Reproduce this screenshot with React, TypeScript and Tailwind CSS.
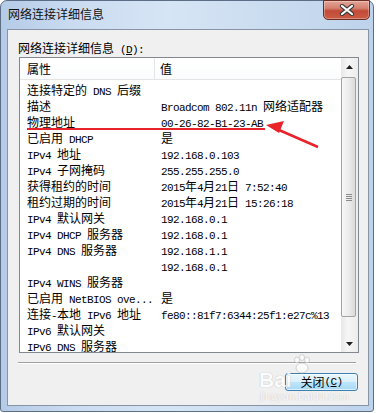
const rows: [string, string][] = [
  ['连接特定的 DNS 后缀', ''],
  ['描述', 'Broadcom 802.11n 网络适配器'],
  ['物理地址', '00-26-82-B1-23-AB'],
  ['已启用 DHCP', '是'],
  ['IPv4 地址', '192.168.0.103'],
  ['IPv4 子网掩码', '255.255.255.0'],
  ['获得租约的时间', '2015年4月21日 7:52:40'],
  ['租约过期的时间', '2015年4月21日 15:26:18'],
  ['IPv4 默认网关', '192.168.0.1'],
  ['IPv4 DHCP 服务器', '192.168.0.1'],
  ['IPv4 DNS 服务器', '192.168.1.1'],
  ['', '192.168.0.1'],
  ['IPv4 WINS 服务器', ''],
  ['已启用 NetBIOS ove...', '是'],
  ['连接-本地 IPv6 地址', 'fe80::81f7:6344:25f1:e27c%13'],
  ['IPv6 默认网关', ''],
  ['IPv6 DNS 服务器', ''],
];

// SimSun style: half-width latin (6px) mixed with 12px CJK
function Mixed({ text }: { text: string }) {
  const parts = text.split(/([\x20-\x7e]+)/).filter(Boolean);
  return (
    <>
      {parts.map((p, i) =>
        /^[\x20-\x7e]+$/.test(p) ? (
          <span key={i} className="font-['Liberation_Mono',monospace] text-[11px] tracking-[-0.6px] whitespace-pre">
            {p}
          </span>
        ) : (
          <span key={i}>{p}</span>
        )
      )}
    </>
  );
}

function ScrollBar() {
  return (
    <div className="w-[17px] shrink-0 flex flex-col bg-[linear-gradient(90deg,#e8e8e8,#f6f6f6_40%,#ececec)]">
      <div className="h-[17px] flex items-center justify-center">
        <svg width="7" height="4" viewBox="0 0 7 4">
          <path d="M3.5 0 L7 4 L0 4 Z" fill="#1f1f1f" />
        </svg>
      </div>
      <div className="mr-[2px] mt-[2px] h-[240px] rounded-[2px] border border-[#a3a3a3] bg-[linear-gradient(90deg,#f7f7f7,#ececec_50%,#dadada)] flex items-center justify-center">
        <div className="flex flex-col gap-[1px]">
          <div className="w-[6px] h-[1px] bg-[#8a8a8a]" />
          <div className="w-[6px] h-[1px] bg-[#8a8a8a]" />
          <div className="w-[6px] h-[1px] bg-[#8a8a8a]" />
          <div className="w-[6px] h-[1px] bg-[#8a8a8a]" />
        </div>
      </div>
      <div className="flex-1" />
      <div className="h-[17px] flex items-center justify-center">
        <svg width="7" height="4" viewBox="0 0 7 4">
          <path d="M0 0 L7 0 L3.5 4 Z" fill="#1f1f1f" />
        </svg>
      </div>
    </div>
  );
}

export default function App() {
  return (
    <div className="relative w-[376px] h-[413px] overflow-hidden bg-white font-['Noto_Sans_CJK_SC',sans-serif] text-[12px] text-black">
      <div className="w-[374px] h-[412px] flex flex-col border border-[#5c6e86] rounded-t-[7px] rounded-b-[3px] bg-[linear-gradient(90deg,#b4cbe7_0%,#cbdcf1_20%,#d6e5f5_45%,#c9dbef_75%,#bdd3ec_100%)] pl-[6px] pr-[4px] pb-[5px]">
        {/* title bar */}
        <div className="h-[28px] shrink-0 flex items-start">
          <div className="mt-[5px] ml-[1px] leading-[16px] text-[12px] text-[#111]">网络连接详细信息</div>
          <div className="ml-auto -mt-[1px] -mr-[1px] w-[47px] h-[20px] rounded-b-[5px] border border-[#6d2d24] bg-[linear-gradient(180deg,#e3a597_0%,#d5806f_40%,#c24a37_55%,#cb5c45_100%)] shadow-[inset_0_0_0_1px_rgba(255,255,255,0.3)] flex items-center justify-center">
            <svg width="16" height="12" viewBox="0 0 16 12">
              <path d="M3 2 L13 10 M13 2 L3 10" stroke="#3a3a3a" strokeWidth="4.2" strokeLinecap="round" />
              <path d="M3 2 L13 10 M13 2 L3 10" stroke="#ffffff" strokeWidth="2.2" strokeLinecap="round" />
            </svg>
          </div>
        </div>

        {/* client area */}
        <div className="flex-1 flex flex-col border border-[#8794a6] bg-[#f0f0f0] pl-[10px] pt-[10px]">
          <div className="h-[16px] leading-[16px] mb-[1px]">
            <Mixed text="网络连接详细信息 (" />
            <span className="font-['Liberation_Mono',monospace] text-[11px] tracking-[-0.6px] underline">D</span>
            <Mixed text="):" />
          </div>

          <div className="ml-[1px] w-[340px] h-[296px] flex border border-[#828790] bg-white">
            <div className="flex-1 min-w-0 flex flex-col">
              <div className="h-[22px] shrink-0 flex border-b border-[#e5e5e5] bg-[linear-gradient(180deg,#ffffff,#fbfcfd)]">
                <div className="w-[135px] pl-[7px] border-r border-[#e5e5e5] leading-[22px]">属性</div>
                <div className="pl-[5px] leading-[22px]">值</div>
              </div>
              <div className="flex-1 overflow-hidden pt-[2px]">
                {rows.map(([k, v], i) => (
                  <div key={i} className="flex h-[16px] leading-[16px] whitespace-nowrap">
                    <div className="w-[135px] shrink-0 pl-[7px] overflow-hidden">
                      <Mixed text={k} />
                    </div>
                    <div className="pl-[6px]">
                      <Mixed text={v} />
                    </div>
                  </div>
                ))}
              </div>
            </div>
            <ScrollBar />
          </div>

          <div className="mt-[9px] w-[338px] h-[2px] border-t border-[#a0a0a0] border-b border-b-white" />

          <div className="mt-[9px] flex justify-end pr-[10px]">
            <div className="w-[73px] h-[18px] rounded-[3px] border border-[#3c7fb1] bg-[linear-gradient(180deg,#eaf6fd_0%,#d9f0fc_50%,#bee6fd_50%,#a7d9f5_100%)] shadow-[inset_0_0_0_1px_rgba(255,255,255,0.6)] flex items-center justify-center leading-[16px]">
              <span>关闭</span>
              <Mixed text="(" />
              <span className="font-['Liberation_Mono',monospace] text-[11px] tracking-[-0.6px] underline">C</span>
              <Mixed text=")" />
            </div>
          </div>
        </div>
      </div>

      {/* baidu watermark */}
      <div className="absolute left-[259px] top-[369px] font-['Liberation_Sans',sans-serif] font-bold text-[21px] leading-[21px] text-white opacity-80 [text-shadow:0_0_1px_#9a9a9a] pointer-events-none">
        Bai
      </div>
      <div className="absolute left-[292px] top-[354px] pointer-events-none opacity-70">
        <svg width="20" height="20" viewBox="0 0 20 20">
          <ellipse cx="5" cy="6" rx="2.5" ry="3" fill="#fff" stroke="#b5b5b5" strokeWidth="0.8" />
          <ellipse cx="10" cy="3.5" rx="2.5" ry="3" fill="#fff" stroke="#b5b5b5" strokeWidth="0.8" />
          <ellipse cx="15" cy="6" rx="2.5" ry="3" fill="#fff" stroke="#b5b5b5" strokeWidth="0.8" />
          <ellipse cx="10" cy="14" rx="6" ry="5" fill="#fff" stroke="#b5b5b5" strokeWidth="0.8" />
        </svg>
      </div>
      <div className="absolute left-[260px] top-[390px] font-['Liberation_Sans',sans-serif] text-[11px] leading-[12px] text-white opacity-80 [text-shadow:0_0_1px_#a5a5a5] pointer-events-none">
        jingyan.baidu.com
      </div>

      {/* red annotation */}
      <svg className="absolute left-0 top-0 pointer-events-none" width="376" height="413" viewBox="0 0 376 413">
        <line x1="27" y1="129" x2="265" y2="129" stroke="#e8232b" strokeWidth="2" />
        <line x1="318" y1="147" x2="279" y2="130" stroke="#e8232b" strokeWidth="2.5" />
        <polygon points="266,125 284,121 279,133" fill="#e8232b" />
      </svg>
    </div>
  );
}
